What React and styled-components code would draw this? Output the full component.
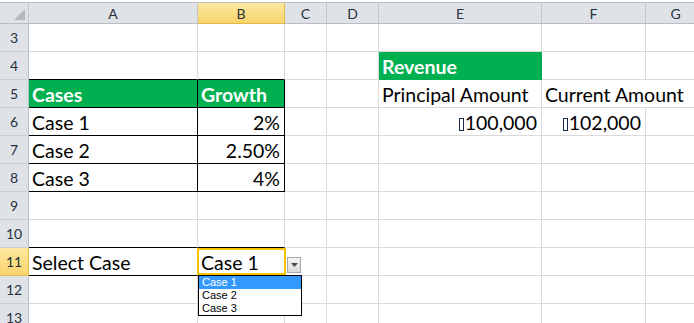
import React from "react";
import styled, { createGlobalStyle } from "styled-components";

const GRID = "#dadada";
const GREEN = "#00b050";
const BLACK = "#000";

const COLUMNS = [
  { id: "A", w: 169 },
  { id: "B", w: 87 },
  { id: "C", w: 42 },
  { id: "D", w: 52 },
  { id: "E", w: 163 },
  { id: "F", w: 104 },
  { id: "G", w: 60 },
];
const ROWS = [3, 4, 5, 6, 7, 8, 9, 10, 11, 12, 13];
const ACTIVE_COL = "B";
const ACTIVE_ROW = 11;

// cell contents and formatting, keyed by address
const CELLS = {
  A4: { bb: BLACK },
  B4: { bb: BLACK },
  E4: { text: "Revenue", fill: GREEN, bold: true, color: "#fff", bb: GREEN, br: GREEN },
  A5: { text: "Cases", fill: GREEN, bold: true, color: "#fff", bb: BLACK, br: BLACK },
  B5: { text: "Growth", fill: GREEN, bold: true, color: "#fff", bb: BLACK, br: BLACK },
  E5: { text: "Principal Amount" },
  F5: { text: "Current Amount", br: "transparent" },
  A6: { text: "Case 1", bb: BLACK, br: BLACK },
  B6: { text: "2%", right: true, bb: BLACK, br: BLACK },
  E6: { text: "100,000", right: true, currency: true },
  F6: { text: "102,000", right: true, currency: true },
  A7: { text: "Case 2", bb: BLACK, br: BLACK },
  B7: { text: "2.50%", right: true, bb: BLACK, br: BLACK },
  A8: { text: "Case 3", bb: BLACK, br: BLACK },
  B8: { text: "4%", right: true, bb: BLACK, br: BLACK },
  A10: { bb: BLACK },
  B10: { bb: BLACK },
  A11: { text: "Select Case", bb: BLACK },
  B11: { text: "Case 1", bb: BLACK, dropdown: true },
};

const OPTIONS = ["Case 1", "Case 2", "Case 3"];

const GlobalStyle = createGlobalStyle`
  html, body {
    margin: 0;
    padding: 0;
    background: #fff;
    overflow: hidden;
  }
`;

const Page = styled.div`
  width: 694px;
  height: 323px;
  padding-top: 2px;
  box-sizing: border-box;
  overflow: hidden;
  background: #fff;
`;

const Sheet = styled.div`
  display: grid;
  grid-template-columns: 29px ${COLUMNS.map((c) => c.w + "px").join(" ")};
  grid-template-rows: 21px;
  grid-auto-rows: 28px;
  border-top: 1px solid #b9bec4;
`;

const HeadCell = styled.div`
  box-sizing: border-box;
  display: flex;
  align-items: center;
  justify-content: center;
  padding-top: 1px;
  font-family: Lato, "Liberation Sans", sans-serif;
  font-size: 14px;
  color: #27313d;
  background: ${(p) =>
    p.$active ? "linear-gradient(#fde89f, #f9d46c)" : "#dfe3e8"};
  border-right: 1px solid ${(p) => (p.$active ? "#e3b84e" : "#c2c7cd")};
  border-bottom: 1px solid ${(p) => (p.$active ? "#e3b84e" : "#b9bec4")};
`;

const RowHead = styled(HeadCell)`
  align-items: flex-end;
  padding: 0 0 5px;
  border-right: 1px solid ${(p) => (p.$active ? "#e3b84e" : "#b9bec4")};
  border-bottom: 1px solid ${(p) => (p.$active ? "#e3b84e" : "#c9ced4")};
`;

const Corner = styled(HeadCell)`
  align-items: flex-end;
  justify-content: flex-end;
  padding: 0 3px 3px 0;
`;

const Cell = styled.div`
  position: relative;
  min-width: 0;
  box-sizing: border-box;
  display: flex;
  align-items: flex-end;
  justify-content: ${(p) => (p.$right ? "flex-end" : "flex-start")};
  padding: 0 4px 3px 3px;
  font-family: Lato, "Liberation Sans", sans-serif;
  font-size: 19.5px;
  line-height: 1;
  white-space: nowrap;
  font-weight: ${(p) => (p.$bold ? 700 : 400)};
  color: ${(p) => p.$color || "#000"};
  background: ${(p) => p.$fill || "transparent"};
  border-right: 1px solid ${(p) => p.$br || GRID};
  border-bottom: 1px solid ${(p) => p.$bb || GRID};
  z-index: ${(p) => (p.$raised ? 2 : "auto")};
`;

const Tofu = styled.span`
  display: inline-block;
  box-sizing: border-box;
  width: 5px;
  height: 13px;
  margin-right: 1px;
  margin-bottom: 1px;
  border: 1px solid #1b2a44;
`;

const Selection = styled.div`
  position: absolute;
  left: -1px;
  top: 0;
  width: 89px;
  height: 27px;
  box-sizing: border-box;
  border: 2px solid #f7c100;
  pointer-events: none;
`;

const DropButton = styled.div`
  position: absolute;
  left: 89px;
  top: 9px;
  width: 14px;
  height: 16px;
  box-sizing: border-box;
  display: flex;
  align-items: center;
  justify-content: center;
  background: linear-gradient(#f3f3f3, #dcdcdc);
  border: 1px solid #a7a7a7;
`;

const DropList = styled.div`
  position: absolute;
  left: 0;
  top: 27px;
  width: 104px;
  height: 41px;
  box-sizing: border-box;
  background: #fff;
  border: 1px solid #000;
  display: flex;
  flex-direction: column;
`;

const Option = styled.div`
  height: 13px;
  padding-left: 3px;
  font-family: "Liberation Sans", Arial, sans-serif;
  font-size: 11px;
  line-height: 13px;
  color: ${(p) => (p.$selected ? "#fff" : "#000")};
  background: ${(p) => (p.$selected ? "#3399ff" : "transparent")};
`;

function CornerTriangle() {
  return (
    <svg width="11" height="11" viewBox="0 0 11 11">
      <path d="M11 0 L11 11 L0 11 Z" fill="#b5bac0" />
    </svg>
  );
}

function DropArrow() {
  return (
    <svg width="7" height="4" viewBox="0 0 7 4">
      <path d="M0 0 L7 0 L3.5 4 Z" fill="#4d4d4d" />
    </svg>
  );
}

function SheetCell({ cell }) {
  const c = cell || {};
  return (
    <Cell
      $right={c.right}
      $bold={c.bold}
      $color={c.color}
      $fill={c.fill}
      $br={c.br}
      $bb={c.bb}
      $raised={c.dropdown}
    >
      {c.currency && <Tofu />}
      {c.text}
      {c.dropdown && (
        <>
          <Selection />
          <DropButton>
            <DropArrow />
          </DropButton>
          <DropList>
            {OPTIONS.map((o, i) => (
              <Option key={o} $selected={i === 0}>
                {o}
              </Option>
            ))}
          </DropList>
        </>
      )}
    </Cell>
  );
}

export default function App() {
  return (
    <Page>
      <GlobalStyle />
      <Sheet>
        <Corner>
          <CornerTriangle />
        </Corner>
        {COLUMNS.map((col) => (
          <HeadCell key={col.id} $active={col.id === ACTIVE_COL}>
            {col.id}
          </HeadCell>
        ))}
        {ROWS.map((r) => (
          <React.Fragment key={r}>
            <RowHead $active={r === ACTIVE_ROW}>{r}</RowHead>
            {COLUMNS.map((col) => (
              <SheetCell key={col.id + r} cell={CELLS[col.id + r]} />
            ))}
          </React.Fragment>
        ))}
      </Sheet>
    </Page>
  );
}
